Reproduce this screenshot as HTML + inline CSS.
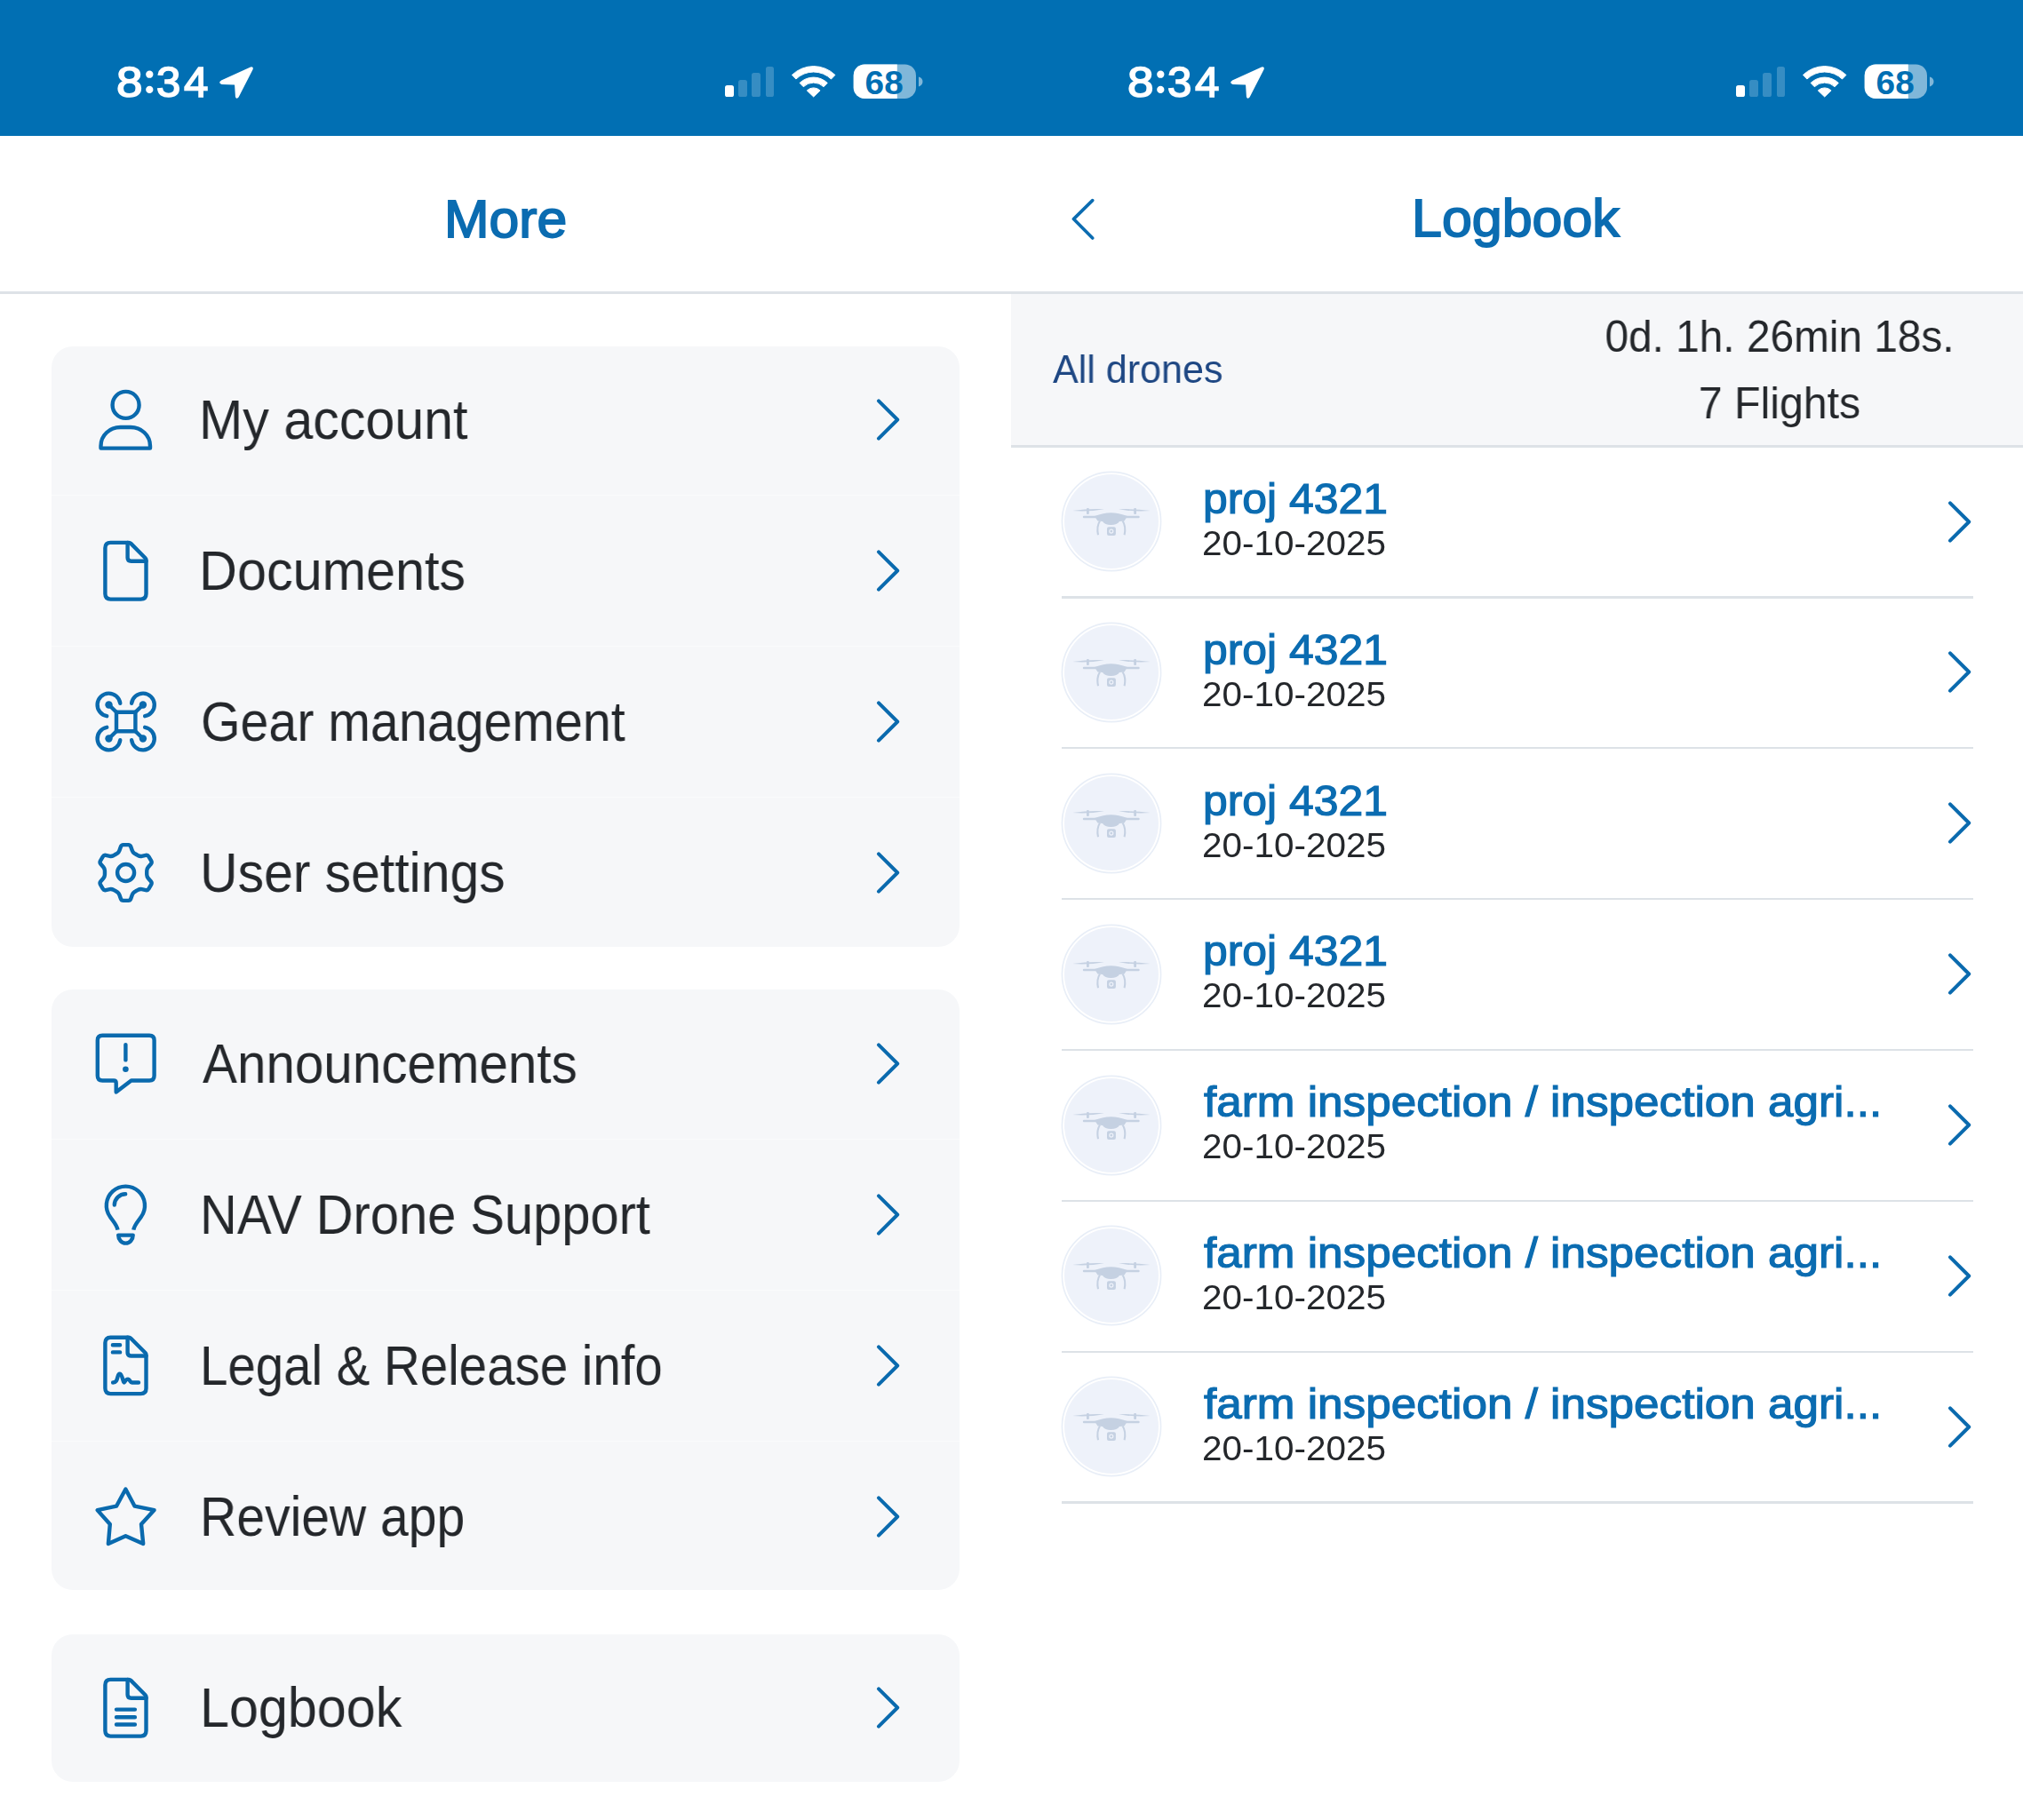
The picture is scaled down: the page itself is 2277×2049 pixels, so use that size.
<!DOCTYPE html>
<html><head><meta charset="utf-8"><style>
html,body{margin:0;padding:0;}
body{width:2277px;height:2049px;position:relative;overflow:hidden;background:#ffffff;font-family:"Liberation Sans",sans-serif;}
.t{position:absolute;white-space:nowrap;will-change:transform;}
</style></head><body>
<div style="position:absolute;left:0px;top:0px;width:2277px;height:153px;background:#016fb3;border-radius:0px;"></div>
<div class="t" style="left:131.00px;top:68.11px;font-size:48.30px;line-height:48.30px;color:#fff;font-weight:400;-webkit-text-stroke:1.6px #fff;transform:scaleX(1.1);transform-origin:left;">8</div>
<div class="t" style="left:176.00px;top:68.11px;font-size:48.30px;line-height:48.30px;color:#fff;font-weight:400;-webkit-text-stroke:1.6px #fff;letter-spacing:3.5px;transform:scaleX(1.02);transform-origin:left;">34</div>
<svg style="position:absolute;left:160px;top:76px;" width="18" height="36" viewBox="0 0 18 36"><circle cx="8.3" cy="7.7" r="4.15" fill="#fff"/><circle cx="8.3" cy="24.9" r="4.15" fill="#fff"/></svg>
<svg style="position:absolute;left:240px;top:70px;" width="50" height="46" viewBox="0 0 50 46"><path d="M42.5 6.8 L9.5 21.8 Q7.5 23 9.5 23.6 L24 24.2 Q25.3 24.3 25.4 25.6 L26.2 38.6 Q26.6 40 27.4 38.8 L43.4 7.7 Q44 6.2 42.5 6.8 Z" fill="#fff" stroke="#fff" stroke-width="2.6" stroke-linejoin="round"/></svg>
<div style="position:absolute;left:816px;top:96px;width:9.9px;height:13.099999999999994px;background:rgba(255,255,255,1);border-radius:2.6px;"></div>
<div style="position:absolute;left:831.3px;top:89.7px;width:9.3px;height:19.39999999999999px;background:rgba(255,255,255,0.21);border-radius:2.6px;"></div>
<div style="position:absolute;left:846.3px;top:82px;width:9.3px;height:27.099999999999994px;background:rgba(255,255,255,0.21);border-radius:2.6px;"></div>
<div style="position:absolute;left:861.8px;top:74.6px;width:9.3px;height:34.5px;background:rgba(255,255,255,0.21);border-radius:2.6px;"></div>
<svg style="position:absolute;left:888px;top:70px;" width="56" height="44" viewBox="0 0 56 44"><g fill="#fff" stroke="#fff" stroke-width="1" stroke-linejoin="round"><path d="M3.46 14.40 A34.9 34.9 0 0 1 51.94 14.40 L47.50 19.00 A28.5 28.5 0 0 0 7.90 19.00 Z"/><path d="M12.14 23.39 A22.4 22.4 0 0 1 43.26 23.39 L39.09 27.70 A16.4 16.4 0 0 0 16.31 27.70 Z"/><path d="M27.7 39.0 L20.30 31.90 A10.6 10.6 0 0 1 35.10 31.90 Z"/></g></svg>
<svg style="position:absolute;left:958px;top:70px;" width="84" height="44" viewBox="0 0 84 44"><defs><clipPath id="bc0"><rect x="2.7" y="2.4" width="70.3" height="38.6" rx="12.5"/></clipPath></defs><rect x="2.7" y="2.4" width="70.3" height="38.6" rx="12.5" fill="rgba(255,255,255,0.5)"/><rect x="0" y="0" width="51.8" height="44" fill="#fff" clip-path="url(#bc0)"/><path d="M76 16.6 Q80.5 18 80.5 22 Q80.5 26 76 27.4 Z" fill="rgba(255,255,255,0.5)"/><text x="37.2" y="35.6" text-anchor="middle" font-family="Liberation Sans" font-weight="700" font-size="37.3" fill="#016fb3" transform="translate(37.8 0) scale(1.04 1) translate(-37.8 0)">68</text></svg>
<div class="t" style="left:1269.00px;top:68.11px;font-size:48.30px;line-height:48.30px;color:#fff;font-weight:400;-webkit-text-stroke:1.6px #fff;transform:scaleX(1.1);transform-origin:left;">8</div>
<div class="t" style="left:1314.00px;top:68.11px;font-size:48.30px;line-height:48.30px;color:#fff;font-weight:400;-webkit-text-stroke:1.6px #fff;letter-spacing:3.5px;transform:scaleX(1.02);transform-origin:left;">34</div>
<svg style="position:absolute;left:1298px;top:76px;" width="18" height="36" viewBox="0 0 18 36"><circle cx="8.3" cy="7.7" r="4.15" fill="#fff"/><circle cx="8.3" cy="24.9" r="4.15" fill="#fff"/></svg>
<svg style="position:absolute;left:1378px;top:70px;" width="50" height="46" viewBox="0 0 50 46"><path d="M42.5 6.8 L9.5 21.8 Q7.5 23 9.5 23.6 L24 24.2 Q25.3 24.3 25.4 25.6 L26.2 38.6 Q26.6 40 27.4 38.8 L43.4 7.7 Q44 6.2 42.5 6.8 Z" fill="#fff" stroke="#fff" stroke-width="2.6" stroke-linejoin="round"/></svg>
<div style="position:absolute;left:1954px;top:96px;width:9.9px;height:13.099999999999994px;background:rgba(255,255,255,1);border-radius:2.6px;"></div>
<div style="position:absolute;left:1969.3px;top:89.7px;width:9.3px;height:19.39999999999999px;background:rgba(255,255,255,0.21);border-radius:2.6px;"></div>
<div style="position:absolute;left:1984.3px;top:82px;width:9.3px;height:27.099999999999994px;background:rgba(255,255,255,0.21);border-radius:2.6px;"></div>
<div style="position:absolute;left:1999.8px;top:74.6px;width:9.3px;height:34.5px;background:rgba(255,255,255,0.21);border-radius:2.6px;"></div>
<svg style="position:absolute;left:2026px;top:70px;" width="56" height="44" viewBox="0 0 56 44"><g fill="#fff" stroke="#fff" stroke-width="1" stroke-linejoin="round"><path d="M3.46 14.40 A34.9 34.9 0 0 1 51.94 14.40 L47.50 19.00 A28.5 28.5 0 0 0 7.90 19.00 Z"/><path d="M12.14 23.39 A22.4 22.4 0 0 1 43.26 23.39 L39.09 27.70 A16.4 16.4 0 0 0 16.31 27.70 Z"/><path d="M27.7 39.0 L20.30 31.90 A10.6 10.6 0 0 1 35.10 31.90 Z"/></g></svg>
<svg style="position:absolute;left:2096px;top:70px;" width="84" height="44" viewBox="0 0 84 44"><defs><clipPath id="bc1138"><rect x="2.7" y="2.4" width="70.3" height="38.6" rx="12.5"/></clipPath></defs><rect x="2.7" y="2.4" width="70.3" height="38.6" rx="12.5" fill="rgba(255,255,255,0.5)"/><rect x="0" y="0" width="51.8" height="44" fill="#fff" clip-path="url(#bc1138)"/><path d="M76 16.6 Q80.5 18 80.5 22 Q80.5 26 76 27.4 Z" fill="rgba(255,255,255,0.5)"/><text x="37.2" y="35.6" text-anchor="middle" font-family="Liberation Sans" font-weight="700" font-size="37.3" fill="#016fb3" transform="translate(37.8 0) scale(1.04 1) translate(-37.8 0)">68</text></svg>
<div style="position:absolute;left:0px;top:153px;width:2277px;height:175px;background:#ffffff;border-radius:0px;"></div>
<div style="position:absolute;left:0px;top:328px;width:2277px;height:3px;background:#dde2e7;border-radius:0px;"></div>
<div class="t" style="left:499.50px;top:217.55px;font-size:58.30px;line-height:58.30px;color:#0b6cb1;font-weight:400;-webkit-text-stroke:1.8px #0b6cb1;transform:scaleX(1.04);transform-origin:left;">More</div>
<div class="t" style="left:1589.00px;top:217.05px;font-size:58.30px;line-height:58.30px;color:#0b6cb1;font-weight:400;-webkit-text-stroke:1.8px #0b6cb1;transform:scaleX(1.045);transform-origin:left;">Logbook</div>
<svg style="position:absolute;left:1200px;top:215px;" width="40" height="62" viewBox="0 0 40 62"><path d="M29.7 10.6 L8.4 31.6 L29.7 53" fill="none" stroke="#0b6cb1" stroke-width="3.6" stroke-linecap="round" stroke-linejoin="round"/></svg>
<div style="position:absolute;left:58px;top:389.8px;width:1022px;height:675.9px;background:#f6f7f9;border-radius:24px;"></div>
<div style="position:absolute;left:58px;top:1113.9px;width:1022px;height:675.9px;background:#f6f7f9;border-radius:24px;"></div>
<div style="position:absolute;left:58px;top:1839.6px;width:1022px;height:166.3px;background:#f6f7f9;border-radius:24px;"></div>
<div style="position:absolute;left:58px;top:557px;width:1022px;height:1px;background:rgba(255,255,255,0.45);border-radius:0px;"></div>
<div style="position:absolute;left:58px;top:727px;width:1022px;height:1px;background:rgba(255,255,255,0.45);border-radius:0px;"></div>
<div style="position:absolute;left:58px;top:897px;width:1022px;height:1px;background:rgba(255,255,255,0.45);border-radius:0px;"></div>
<div style="position:absolute;left:58px;top:1282px;width:1022px;height:1px;background:rgba(255,255,255,0.45);border-radius:0px;"></div>
<div style="position:absolute;left:58px;top:1452px;width:1022px;height:1px;background:rgba(255,255,255,0.45);border-radius:0px;"></div>
<div style="position:absolute;left:58px;top:1622px;width:1022px;height:1px;background:rgba(255,255,255,0.45);border-radius:0px;"></div>
<div class="t" style="left:224.10px;top:441.24px;font-size:62.50px;line-height:62.50px;color:#24272b;font-weight:400;transform:scaleX(0.9463);transform-origin:left;">My account</div>
<svg style="position:absolute;left:95px;top:420px;" width="100" height="100" viewBox="0 0 100 100"><circle cx="46.6" cy="35.9" r="15" fill="none" stroke="#0a6aae" stroke-width="4.4" stroke-linecap="round" stroke-linejoin="round"/><path d="M18.5 84.6 L18.5 82 C18.5 70 28.5 61 40.5 61 L52 61 C64 61 74 70 74 82 L74 84.6 Z" fill="none" stroke="#0a6aae" stroke-width="4.4" stroke-linecap="round" stroke-linejoin="round"/></svg>
<svg style="position:absolute;left:986px;top:449.15px;" width="30" height="48" viewBox="0 0 30 48"><path d="M3 2.3 L24.2 23.5 L3 44.7" fill="none" stroke="#0a6aae" stroke-width="4" stroke-linecap="round" stroke-linejoin="round"/></svg>
<div class="t" style="left:224.10px;top:611.29px;font-size:62.50px;line-height:62.50px;color:#24272b;font-weight:400;transform:scaleX(0.9495);transform-origin:left;">Documents</div>
<svg style="position:absolute;left:95px;top:590px;" width="100" height="100" viewBox="0 0 100 100"><path d="M29.4 20.9 L50 20.9 Q51.3 20.9 52.3 21.9 L68.5 38.2 Q69.5 39.2 69.5 40.6 L69.5 78.6 Q69.5 84.6 63.5 84.6 L29.4 84.6 Q23.4 84.6 23.4 78.6 L23.4 26.9 Q23.4 20.9 29.4 20.9 Z" fill="none" stroke="#0a6aae" stroke-width="4.4" stroke-linecap="round" stroke-linejoin="round"/><path d="M48.6 20.9 L48.6 37.8 Q48.6 41.8 52.6 41.8 L69.5 41.8" fill="none" stroke="#0a6aae" stroke-width="4.4" stroke-linecap="round" stroke-linejoin="round"/></svg>
<svg style="position:absolute;left:986px;top:619.2px;" width="30" height="48" viewBox="0 0 30 48"><path d="M3 2.3 L24.2 23.5 L3 44.7" fill="none" stroke="#0a6aae" stroke-width="4" stroke-linecap="round" stroke-linejoin="round"/></svg>
<div class="t" style="left:226.20px;top:781.34px;font-size:62.50px;line-height:62.50px;color:#24272b;font-weight:400;transform:scaleX(0.9166);transform-origin:left;">Gear management</div>
<svg style="position:absolute;left:95px;top:760px;" width="100" height="100" viewBox="0 0 100 100"><rect x="36" y="41.8" width="21.4" height="21.4" fill="none" stroke="#0a6aae" stroke-width="4.4" stroke-linecap="round" stroke-linejoin="round" stroke-linejoin="miter"/><path d="M36 41.8 L27.5 33.5" fill="none" stroke="#0a6aae" stroke-width="4.4" stroke-linecap="round" stroke-linejoin="round"/><circle cx="27.5" cy="33.5" r="4.2" fill="#0a6aae"/><path d="M40.27 31.70 A12.9 12.9 0 1 0 25.26 46.20" fill="none" stroke="#0a6aae" stroke-width="4.4" stroke-linecap="round" stroke-linejoin="round"/><path d="M57.4 41.8 L65.9 33.5" fill="none" stroke="#0a6aae" stroke-width="4.4" stroke-linecap="round" stroke-linejoin="round"/><circle cx="65.9" cy="33.5" r="4.2" fill="#0a6aae"/><path d="M68.14 46.20 A12.9 12.9 0 1 0 53.13 31.70" fill="none" stroke="#0a6aae" stroke-width="4.4" stroke-linecap="round" stroke-linejoin="round"/><path d="M36 63.2 L27.5 71.5" fill="none" stroke="#0a6aae" stroke-width="4.4" stroke-linecap="round" stroke-linejoin="round"/><circle cx="27.5" cy="71.5" r="4.2" fill="#0a6aae"/><path d="M25.26 58.80 A12.9 12.9 0 1 0 40.27 73.30" fill="none" stroke="#0a6aae" stroke-width="4.4" stroke-linecap="round" stroke-linejoin="round"/><path d="M57.4 63.2 L65.9 71.5" fill="none" stroke="#0a6aae" stroke-width="4.4" stroke-linecap="round" stroke-linejoin="round"/><circle cx="65.9" cy="71.5" r="4.2" fill="#0a6aae"/><path d="M53.13 73.30 A12.9 12.9 0 1 0 68.14 58.80" fill="none" stroke="#0a6aae" stroke-width="4.4" stroke-linecap="round" stroke-linejoin="round"/></svg>
<svg style="position:absolute;left:986px;top:789.25px;" width="30" height="48" viewBox="0 0 30 48"><path d="M3 2.3 L24.2 23.5 L3 44.7" fill="none" stroke="#0a6aae" stroke-width="4" stroke-linecap="round" stroke-linejoin="round"/></svg>
<div class="t" style="left:225.00px;top:951.39px;font-size:62.50px;line-height:62.50px;color:#24272b;font-weight:400;transform:scaleX(0.9422);transform-origin:left;">User settings</div>
<svg style="position:absolute;left:95px;top:930px;" width="100" height="100" viewBox="0 0 100 100"><path d="M36.85 30.78 Q38.72 29.62 39.43 27.54 L40.92 23.17 Q41.63 21.09 43.83 21.09 L49.37 21.09 Q51.57 21.09 52.28 23.17 L53.77 27.54 Q54.48 29.62 56.35 30.78 L56.53 30.90 Q58.40 32.06 60.34 33.10 L60.54 33.20 Q62.48 34.24 64.63 33.81 L69.16 32.91 Q71.31 32.49 72.41 34.39 L75.19 39.20 Q76.29 41.10 74.84 42.76 L71.80 46.23 Q70.36 47.88 70.28 50.08 L70.27 50.30 Q70.20 52.50 70.27 54.70 L70.28 54.92 Q70.36 57.12 71.80 58.77 L74.84 62.24 Q76.29 63.90 75.19 65.80 L72.41 70.61 Q71.31 72.51 69.16 72.09 L64.63 71.19 Q62.48 70.76 60.54 71.80 L60.34 71.90 Q58.40 72.94 56.53 74.10 L56.35 74.22 Q54.48 75.38 53.77 77.46 L52.28 81.83 Q51.57 83.91 49.37 83.91 L43.83 83.91 Q41.63 83.91 40.92 81.83 L39.43 77.46 Q38.72 75.38 36.85 74.22 L36.67 74.10 Q34.80 72.94 32.86 71.90 L32.66 71.80 Q30.72 70.76 28.57 71.19 L24.04 72.09 Q21.89 72.51 20.79 70.61 L18.01 65.80 Q16.91 63.90 18.36 62.24 L21.40 58.77 Q22.84 57.12 22.92 54.92 L22.93 54.70 Q23.00 52.50 22.93 50.30 L22.92 50.08 Q22.84 47.88 21.40 46.23 L18.36 42.76 Q16.91 41.10 18.01 39.20 L20.79 34.39 Q21.89 32.49 24.04 32.91 L28.57 33.81 Q30.72 34.24 32.66 33.20 L32.86 33.10 Q34.80 32.06 36.67 30.90 Z" fill="none" stroke="#0a6aae" stroke-width="4.4" stroke-linecap="round" stroke-linejoin="round"/><circle cx="46.6" cy="52.5" r="9.5" fill="none" stroke="#0a6aae" stroke-width="4.4" stroke-linecap="round" stroke-linejoin="round"/></svg>
<svg style="position:absolute;left:986px;top:959.3px;" width="30" height="48" viewBox="0 0 30 48"><path d="M3 2.3 L24.2 23.5 L3 44.7" fill="none" stroke="#0a6aae" stroke-width="4" stroke-linecap="round" stroke-linejoin="round"/></svg>
<div class="t" style="left:227.70px;top:1165.84px;font-size:62.50px;line-height:62.50px;color:#24272b;font-weight:400;transform:scaleX(0.9337);transform-origin:left;">Announcements</div>
<svg style="position:absolute;left:95px;top:1150px;" width="100" height="100" viewBox="0 0 100 100"><path d="M52.7 66.5 L73.1 66.5 Q78.6 66.5 78.6 61 L78.6 21.2 Q78.6 15.7 73.1 15.7 L20.3 15.7 Q14.8 15.7 14.8 21.2 L14.8 61 Q14.8 66.5 20.3 66.5 L33 66.5 Q35.7 66.5 35.7 69.2 L35.7 79.5 Z" fill="none" stroke="#0a6aae" stroke-width="4.4" stroke-linecap="round" stroke-linejoin="round"/><path d="M46.4 26.1 L46.4 43.4" fill="none" stroke="#0a6aae" stroke-width="4.4" stroke-linecap="round" stroke-linejoin="round"/><circle cx="46.4" cy="53.8" r="3.3" fill="#0a6aae"/></svg>
<svg style="position:absolute;left:986px;top:1173.75px;" width="30" height="48" viewBox="0 0 30 48"><path d="M3 2.3 L24.2 23.5 L3 44.7" fill="none" stroke="#0a6aae" stroke-width="4" stroke-linecap="round" stroke-linejoin="round"/></svg>
<div class="t" style="left:225.00px;top:1335.89px;font-size:62.50px;line-height:62.50px;color:#24272b;font-weight:400;transform:scaleX(0.9256);transform-origin:left;">NAV Drone Support</div>
<svg style="position:absolute;left:95px;top:1320px;" width="100" height="100" viewBox="0 0 100 100"><path d="M37.5 64.6 C36.5 59 32 54.5 29 50 A21.6 21.6 0 1 1 63.8 50 C60.8 54.5 56.3 59 55.3 64.6" fill="none" stroke="#0a6aae" stroke-width="4.4" stroke-linecap="butt" stroke-linejoin="round"/><path d="M33.8 36.5 A12.5 12.5 0 0 1 46.2 24.2" fill="none" stroke="#0a6aae" stroke-width="4.4" stroke-linecap="round" stroke-linejoin="round"/><path d="M38.2 70.6 L54.7 70.6 A8.25 9 0 0 1 38.2 70.6 Z" fill="none" stroke="#0a6aae" stroke-width="4.4" stroke-linecap="round" stroke-linejoin="round"/></svg>
<svg style="position:absolute;left:986px;top:1343.8px;" width="30" height="48" viewBox="0 0 30 48"><path d="M3 2.3 L24.2 23.5 L3 44.7" fill="none" stroke="#0a6aae" stroke-width="4" stroke-linecap="round" stroke-linejoin="round"/></svg>
<div class="t" style="left:225.00px;top:1505.94px;font-size:62.50px;line-height:62.50px;color:#24272b;font-weight:400;transform:scaleX(0.9028);transform-origin:left;">Legal &amp; Release info</div>
<svg style="position:absolute;left:95px;top:1490px;" width="100" height="100" viewBox="0 0 100 100"><path d="M29.4 15.7 L50 15.7 Q51.3 15.7 52.3 16.7 L68.5 33 Q69.5 34 69.5 35.4 L69.5 73.1 Q69.5 79.1 63.5 79.1 L29.4 79.1 Q23.4 79.1 23.4 73.1 L23.4 21.7 Q23.4 15.7 29.4 15.7 Z" fill="none" stroke="#0a6aae" stroke-width="4.4" stroke-linecap="round" stroke-linejoin="round"/><path d="M48.6 15.7 L48.6 32.5 Q48.6 36.5 52.6 36.5 L69.5 36.5" fill="none" stroke="#0a6aae" stroke-width="4.4" stroke-linecap="round" stroke-linejoin="round"/><path d="M31.9 24.2 L40.1 24.2 M31.9 32.4 L40.1 32.4" fill="none" stroke="#0a6aae" stroke-width="4.4" stroke-linecap="round" stroke-linejoin="round"/><path d="M32.1 66.5 C36 66.5 36.5 64 37.5 60 C38.5 56 39 56.6 40.1 56.6 C41.5 56.6 42.5 60 43.5 64 C44.2 67 44.8 66.8 45.5 65.5 C46.5 63.5 47.5 62.6 49.2 62.6 C51 62.6 51.5 66.5 53.5 66.5 L61 66.5" fill="none" stroke="#0a6aae" stroke-width="4.4" stroke-linecap="round" stroke-linejoin="round"/></svg>
<svg style="position:absolute;left:986px;top:1513.85px;" width="30" height="48" viewBox="0 0 30 48"><path d="M3 2.3 L24.2 23.5 L3 44.7" fill="none" stroke="#0a6aae" stroke-width="4" stroke-linecap="round" stroke-linejoin="round"/></svg>
<div class="t" style="left:225.00px;top:1675.99px;font-size:62.50px;line-height:62.50px;color:#24272b;font-weight:400;transform:scaleX(0.9133);transform-origin:left;">Review app</div>
<svg style="position:absolute;left:95px;top:1660px;" width="100" height="100" viewBox="0 0 100 100"><path d="M46.4 16.5 L56.6 35.7 L78.6 40.1 L64 56 L66.2 78 L46.4 69.2 L26.9 78 L28.8 56 L14.6 40.1 L36 35.7 Z" fill="none" stroke="#0a6aae" stroke-width="4.4" stroke-linecap="round" stroke-linejoin="round"/></svg>
<svg style="position:absolute;left:986px;top:1683.9px;" width="30" height="48" viewBox="0 0 30 48"><path d="M3 2.3 L24.2 23.5 L3 44.7" fill="none" stroke="#0a6aae" stroke-width="4" stroke-linecap="round" stroke-linejoin="round"/></svg>
<div class="t" style="left:225.20px;top:1890.79px;font-size:62.50px;line-height:62.50px;color:#24272b;font-weight:400;transform:scaleX(0.948);transform-origin:left;">Logbook</div>
<svg style="position:absolute;left:95px;top:1870px;" width="100" height="100" viewBox="0 0 100 100"><path d="M29.4 20.9 L50 20.9 Q51.3 20.9 52.3 21.9 L68.5 38.2 Q69.5 39.2 69.5 40.6 L69.5 78.6 Q69.5 84.6 63.5 84.6 L29.4 84.6 Q23.4 84.6 23.4 78.6 L23.4 26.9 Q23.4 20.9 29.4 20.9 Z" fill="none" stroke="#0a6aae" stroke-width="4.4" stroke-linecap="round" stroke-linejoin="round"/><path d="M48.6 20.9 L48.6 37.8 Q48.6 41.8 52.6 41.8 L69.5 41.8" fill="none" stroke="#0a6aae" stroke-width="4.4" stroke-linecap="round" stroke-linejoin="round"/><path d="M36 54.6 L56.9 54.6 M36 63.2 L56.9 63.2 M36 71.5 L56.9 71.5" fill="none" stroke="#0a6aae" stroke-width="4.4" stroke-linecap="round" stroke-linejoin="round"/></svg>
<svg style="position:absolute;left:986px;top:1898.7px;" width="30" height="48" viewBox="0 0 30 48"><path d="M3 2.3 L24.2 23.5 L3 44.7" fill="none" stroke="#0a6aae" stroke-width="4" stroke-linecap="round" stroke-linejoin="round"/></svg>
<div style="position:absolute;left:1138px;top:331px;width:1139px;height:170px;background:#f6f7f9;border-radius:0px;"></div>
<div style="position:absolute;left:1138px;top:501px;width:1139px;height:3px;background:#dde2e7;border-radius:0px;"></div>
<div class="t" style="left:1184.50px;top:394.69px;font-size:43.60px;line-height:43.60px;color:#1e4783;font-weight:400;transform:scaleX(0.988);transform-origin:left;">All drones</div>
<div class="t" style="left:2003.00px;top:354.40px;font-size:49.50px;line-height:49.50px;color:#24272b;font-weight:400;transform:translateX(-50%) scaleX(0.965);transform-origin:center;">0d. 1h. 26min 18s.</div>
<div class="t" style="left:2003.00px;top:428.90px;font-size:49.50px;line-height:49.50px;color:#24272b;font-weight:400;transform:translateX(-50%) scaleX(0.975);transform-origin:center;">7 Flights</div>
<svg style="position:absolute;left:1193px;top:529px;" width="116" height="116" viewBox="0 0 116 116"><circle cx="58" cy="58" r="55.6" fill="#fff" stroke="#e8eef7" stroke-width="1.6"/><circle cx="58" cy="58" r="53" fill="#eef2fa"/><g fill="#c5d1e2" transform="translate(-3,-4)"><path d="M17.2 50.1 Q35 47.5 52.9 48.3 Q35 51.5 17.2 50.1 Z"/><path d="M69 48.3 Q87 47.5 104.7 50.1 Q87 51.5 69 48.3 Z"/><rect x="33" y="47" width="2.8" height="7" rx="1"/><rect x="86.2" y="47" width="2.8" height="7" rx="1"/><rect x="28.8" y="55.8" width="63.9" height="2.4" rx="1.2"/><path d="M42 56 Q52 52.2 60.4 52.2 Q69 52.2 79 56 L75.5 61.5 L70 62 Q67.5 66 60.4 66 Q53.5 66 51 62 L45.5 61.5 Z"/><path d="M48 61.5 Q44 67.5 46 77.3" fill="none" stroke="#c5d1e2" stroke-width="2.1"/><path d="M73.6 61.5 Q77.6 67.5 75.6 77.3" fill="none" stroke="#c5d1e2" stroke-width="2.1"/><rect x="56" y="68.3" width="9.9" height="9.7" rx="2"/><circle cx="60.8" cy="73.1" r="2.6" fill="#eef2fa"/><circle cx="60.8" cy="73.1" r="1.4"/></g></svg>
<div class="t" style="left:1354.00px;top:537.71px;font-size:47.60px;line-height:47.60px;color:#0b6cb1;font-weight:400;-webkit-text-stroke:1.2px #0b6cb1;transform:scaleX(1.048);transform-origin:left;">proj 4321</div>
<div class="t" style="left:1353.10px;top:592.79px;font-size:38.40px;line-height:38.40px;color:#24272b;font-weight:400;transform:scaleX(1.054);transform-origin:left;">20-10-2025</div>
<svg style="position:absolute;left:2192.3px;top:563.5px;" width="30" height="48" viewBox="0 0 30 48"><path d="M3 2.3 L24.2 23.5 L3 44.7" fill="none" stroke="#0a6aae" stroke-width="4" stroke-linecap="round" stroke-linejoin="round"/></svg>
<div style="position:absolute;left:1195px;top:671.0px;width:1025.5px;height:2.6px;background:#dde2e7;border-radius:0px;"></div>
<svg style="position:absolute;left:1193px;top:699px;" width="116" height="116" viewBox="0 0 116 116"><circle cx="58" cy="58" r="55.6" fill="#fff" stroke="#e8eef7" stroke-width="1.6"/><circle cx="58" cy="58" r="53" fill="#eef2fa"/><g fill="#c5d1e2" transform="translate(-3,-4)"><path d="M17.2 50.1 Q35 47.5 52.9 48.3 Q35 51.5 17.2 50.1 Z"/><path d="M69 48.3 Q87 47.5 104.7 50.1 Q87 51.5 69 48.3 Z"/><rect x="33" y="47" width="2.8" height="7" rx="1"/><rect x="86.2" y="47" width="2.8" height="7" rx="1"/><rect x="28.8" y="55.8" width="63.9" height="2.4" rx="1.2"/><path d="M42 56 Q52 52.2 60.4 52.2 Q69 52.2 79 56 L75.5 61.5 L70 62 Q67.5 66 60.4 66 Q53.5 66 51 62 L45.5 61.5 Z"/><path d="M48 61.5 Q44 67.5 46 77.3" fill="none" stroke="#c5d1e2" stroke-width="2.1"/><path d="M73.6 61.5 Q77.6 67.5 75.6 77.3" fill="none" stroke="#c5d1e2" stroke-width="2.1"/><rect x="56" y="68.3" width="9.9" height="9.7" rx="2"/><circle cx="60.8" cy="73.1" r="2.6" fill="#eef2fa"/><circle cx="60.8" cy="73.1" r="1.4"/></g></svg>
<div class="t" style="left:1354.00px;top:707.61px;font-size:47.60px;line-height:47.60px;color:#0b6cb1;font-weight:400;-webkit-text-stroke:1.2px #0b6cb1;transform:scaleX(1.048);transform-origin:left;">proj 4321</div>
<div class="t" style="left:1353.10px;top:762.69px;font-size:38.40px;line-height:38.40px;color:#24272b;font-weight:400;transform:scaleX(1.054);transform-origin:left;">20-10-2025</div>
<svg style="position:absolute;left:2192.3px;top:733.4px;" width="30" height="48" viewBox="0 0 30 48"><path d="M3 2.3 L24.2 23.5 L3 44.7" fill="none" stroke="#0a6aae" stroke-width="4" stroke-linecap="round" stroke-linejoin="round"/></svg>
<div style="position:absolute;left:1195px;top:840.9px;width:1025.5px;height:2.6px;background:#dde2e7;border-radius:0px;"></div>
<svg style="position:absolute;left:1193px;top:869px;" width="116" height="116" viewBox="0 0 116 116"><circle cx="58" cy="58" r="55.6" fill="#fff" stroke="#e8eef7" stroke-width="1.6"/><circle cx="58" cy="58" r="53" fill="#eef2fa"/><g fill="#c5d1e2" transform="translate(-3,-4)"><path d="M17.2 50.1 Q35 47.5 52.9 48.3 Q35 51.5 17.2 50.1 Z"/><path d="M69 48.3 Q87 47.5 104.7 50.1 Q87 51.5 69 48.3 Z"/><rect x="33" y="47" width="2.8" height="7" rx="1"/><rect x="86.2" y="47" width="2.8" height="7" rx="1"/><rect x="28.8" y="55.8" width="63.9" height="2.4" rx="1.2"/><path d="M42 56 Q52 52.2 60.4 52.2 Q69 52.2 79 56 L75.5 61.5 L70 62 Q67.5 66 60.4 66 Q53.5 66 51 62 L45.5 61.5 Z"/><path d="M48 61.5 Q44 67.5 46 77.3" fill="none" stroke="#c5d1e2" stroke-width="2.1"/><path d="M73.6 61.5 Q77.6 67.5 75.6 77.3" fill="none" stroke="#c5d1e2" stroke-width="2.1"/><rect x="56" y="68.3" width="9.9" height="9.7" rx="2"/><circle cx="60.8" cy="73.1" r="2.6" fill="#eef2fa"/><circle cx="60.8" cy="73.1" r="1.4"/></g></svg>
<div class="t" style="left:1354.00px;top:877.51px;font-size:47.60px;line-height:47.60px;color:#0b6cb1;font-weight:400;-webkit-text-stroke:1.2px #0b6cb1;transform:scaleX(1.048);transform-origin:left;">proj 4321</div>
<div class="t" style="left:1353.10px;top:932.59px;font-size:38.40px;line-height:38.40px;color:#24272b;font-weight:400;transform:scaleX(1.054);transform-origin:left;">20-10-2025</div>
<svg style="position:absolute;left:2192.3px;top:903.3px;" width="30" height="48" viewBox="0 0 30 48"><path d="M3 2.3 L24.2 23.5 L3 44.7" fill="none" stroke="#0a6aae" stroke-width="4" stroke-linecap="round" stroke-linejoin="round"/></svg>
<div style="position:absolute;left:1195px;top:1010.8px;width:1025.5px;height:2.6px;background:#dde2e7;border-radius:0px;"></div>
<svg style="position:absolute;left:1193px;top:1039px;" width="116" height="116" viewBox="0 0 116 116"><circle cx="58" cy="58" r="55.6" fill="#fff" stroke="#e8eef7" stroke-width="1.6"/><circle cx="58" cy="58" r="53" fill="#eef2fa"/><g fill="#c5d1e2" transform="translate(-3,-4)"><path d="M17.2 50.1 Q35 47.5 52.9 48.3 Q35 51.5 17.2 50.1 Z"/><path d="M69 48.3 Q87 47.5 104.7 50.1 Q87 51.5 69 48.3 Z"/><rect x="33" y="47" width="2.8" height="7" rx="1"/><rect x="86.2" y="47" width="2.8" height="7" rx="1"/><rect x="28.8" y="55.8" width="63.9" height="2.4" rx="1.2"/><path d="M42 56 Q52 52.2 60.4 52.2 Q69 52.2 79 56 L75.5 61.5 L70 62 Q67.5 66 60.4 66 Q53.5 66 51 62 L45.5 61.5 Z"/><path d="M48 61.5 Q44 67.5 46 77.3" fill="none" stroke="#c5d1e2" stroke-width="2.1"/><path d="M73.6 61.5 Q77.6 67.5 75.6 77.3" fill="none" stroke="#c5d1e2" stroke-width="2.1"/><rect x="56" y="68.3" width="9.9" height="9.7" rx="2"/><circle cx="60.8" cy="73.1" r="2.6" fill="#eef2fa"/><circle cx="60.8" cy="73.1" r="1.4"/></g></svg>
<div class="t" style="left:1354.00px;top:1047.41px;font-size:47.60px;line-height:47.60px;color:#0b6cb1;font-weight:400;-webkit-text-stroke:1.2px #0b6cb1;transform:scaleX(1.048);transform-origin:left;">proj 4321</div>
<div class="t" style="left:1353.10px;top:1102.49px;font-size:38.40px;line-height:38.40px;color:#24272b;font-weight:400;transform:scaleX(1.054);transform-origin:left;">20-10-2025</div>
<svg style="position:absolute;left:2192.3px;top:1073.2px;" width="30" height="48" viewBox="0 0 30 48"><path d="M3 2.3 L24.2 23.5 L3 44.7" fill="none" stroke="#0a6aae" stroke-width="4" stroke-linecap="round" stroke-linejoin="round"/></svg>
<div style="position:absolute;left:1195px;top:1180.7px;width:1025.5px;height:2.6px;background:#dde2e7;border-radius:0px;"></div>
<svg style="position:absolute;left:1193px;top:1209px;" width="116" height="116" viewBox="0 0 116 116"><circle cx="58" cy="58" r="55.6" fill="#fff" stroke="#e8eef7" stroke-width="1.6"/><circle cx="58" cy="58" r="53" fill="#eef2fa"/><g fill="#c5d1e2" transform="translate(-3,-4)"><path d="M17.2 50.1 Q35 47.5 52.9 48.3 Q35 51.5 17.2 50.1 Z"/><path d="M69 48.3 Q87 47.5 104.7 50.1 Q87 51.5 69 48.3 Z"/><rect x="33" y="47" width="2.8" height="7" rx="1"/><rect x="86.2" y="47" width="2.8" height="7" rx="1"/><rect x="28.8" y="55.8" width="63.9" height="2.4" rx="1.2"/><path d="M42 56 Q52 52.2 60.4 52.2 Q69 52.2 79 56 L75.5 61.5 L70 62 Q67.5 66 60.4 66 Q53.5 66 51 62 L45.5 61.5 Z"/><path d="M48 61.5 Q44 67.5 46 77.3" fill="none" stroke="#c5d1e2" stroke-width="2.1"/><path d="M73.6 61.5 Q77.6 67.5 75.6 77.3" fill="none" stroke="#c5d1e2" stroke-width="2.1"/><rect x="56" y="68.3" width="9.9" height="9.7" rx="2"/><circle cx="60.8" cy="73.1" r="2.6" fill="#eef2fa"/><circle cx="60.8" cy="73.1" r="1.4"/></g></svg>
<div class="t" style="left:1355.00px;top:1217.31px;font-size:47.60px;line-height:47.60px;color:#0b6cb1;font-weight:400;-webkit-text-stroke:1.2px #0b6cb1;transform:scaleX(1.0765);transform-origin:left;">farm inspection / inspection agri...</div>
<div class="t" style="left:1353.10px;top:1272.39px;font-size:38.40px;line-height:38.40px;color:#24272b;font-weight:400;transform:scaleX(1.054);transform-origin:left;">20-10-2025</div>
<svg style="position:absolute;left:2192.3px;top:1243.1px;" width="30" height="48" viewBox="0 0 30 48"><path d="M3 2.3 L24.2 23.5 L3 44.7" fill="none" stroke="#0a6aae" stroke-width="4" stroke-linecap="round" stroke-linejoin="round"/></svg>
<div style="position:absolute;left:1195px;top:1350.6px;width:1025.5px;height:2.6px;background:#dde2e7;border-radius:0px;"></div>
<svg style="position:absolute;left:1193px;top:1378px;" width="116" height="116" viewBox="0 0 116 116"><circle cx="58" cy="58" r="55.6" fill="#fff" stroke="#e8eef7" stroke-width="1.6"/><circle cx="58" cy="58" r="53" fill="#eef2fa"/><g fill="#c5d1e2" transform="translate(-3,-4)"><path d="M17.2 50.1 Q35 47.5 52.9 48.3 Q35 51.5 17.2 50.1 Z"/><path d="M69 48.3 Q87 47.5 104.7 50.1 Q87 51.5 69 48.3 Z"/><rect x="33" y="47" width="2.8" height="7" rx="1"/><rect x="86.2" y="47" width="2.8" height="7" rx="1"/><rect x="28.8" y="55.8" width="63.9" height="2.4" rx="1.2"/><path d="M42 56 Q52 52.2 60.4 52.2 Q69 52.2 79 56 L75.5 61.5 L70 62 Q67.5 66 60.4 66 Q53.5 66 51 62 L45.5 61.5 Z"/><path d="M48 61.5 Q44 67.5 46 77.3" fill="none" stroke="#c5d1e2" stroke-width="2.1"/><path d="M73.6 61.5 Q77.6 67.5 75.6 77.3" fill="none" stroke="#c5d1e2" stroke-width="2.1"/><rect x="56" y="68.3" width="9.9" height="9.7" rx="2"/><circle cx="60.8" cy="73.1" r="2.6" fill="#eef2fa"/><circle cx="60.8" cy="73.1" r="1.4"/></g></svg>
<div class="t" style="left:1355.00px;top:1387.21px;font-size:47.60px;line-height:47.60px;color:#0b6cb1;font-weight:400;-webkit-text-stroke:1.2px #0b6cb1;transform:scaleX(1.0765);transform-origin:left;">farm inspection / inspection agri...</div>
<div class="t" style="left:1353.10px;top:1442.29px;font-size:38.40px;line-height:38.40px;color:#24272b;font-weight:400;transform:scaleX(1.054);transform-origin:left;">20-10-2025</div>
<svg style="position:absolute;left:2192.3px;top:1413.0px;" width="30" height="48" viewBox="0 0 30 48"><path d="M3 2.3 L24.2 23.5 L3 44.7" fill="none" stroke="#0a6aae" stroke-width="4" stroke-linecap="round" stroke-linejoin="round"/></svg>
<div style="position:absolute;left:1195px;top:1520.5px;width:1025.5px;height:2.6px;background:#dde2e7;border-radius:0px;"></div>
<svg style="position:absolute;left:1193px;top:1548px;" width="116" height="116" viewBox="0 0 116 116"><circle cx="58" cy="58" r="55.6" fill="#fff" stroke="#e8eef7" stroke-width="1.6"/><circle cx="58" cy="58" r="53" fill="#eef2fa"/><g fill="#c5d1e2" transform="translate(-3,-4)"><path d="M17.2 50.1 Q35 47.5 52.9 48.3 Q35 51.5 17.2 50.1 Z"/><path d="M69 48.3 Q87 47.5 104.7 50.1 Q87 51.5 69 48.3 Z"/><rect x="33" y="47" width="2.8" height="7" rx="1"/><rect x="86.2" y="47" width="2.8" height="7" rx="1"/><rect x="28.8" y="55.8" width="63.9" height="2.4" rx="1.2"/><path d="M42 56 Q52 52.2 60.4 52.2 Q69 52.2 79 56 L75.5 61.5 L70 62 Q67.5 66 60.4 66 Q53.5 66 51 62 L45.5 61.5 Z"/><path d="M48 61.5 Q44 67.5 46 77.3" fill="none" stroke="#c5d1e2" stroke-width="2.1"/><path d="M73.6 61.5 Q77.6 67.5 75.6 77.3" fill="none" stroke="#c5d1e2" stroke-width="2.1"/><rect x="56" y="68.3" width="9.9" height="9.7" rx="2"/><circle cx="60.8" cy="73.1" r="2.6" fill="#eef2fa"/><circle cx="60.8" cy="73.1" r="1.4"/></g></svg>
<div class="t" style="left:1355.00px;top:1557.11px;font-size:47.60px;line-height:47.60px;color:#0b6cb1;font-weight:400;-webkit-text-stroke:1.2px #0b6cb1;transform:scaleX(1.0765);transform-origin:left;">farm inspection / inspection agri...</div>
<div class="t" style="left:1353.10px;top:1612.19px;font-size:38.40px;line-height:38.40px;color:#24272b;font-weight:400;transform:scaleX(1.054);transform-origin:left;">20-10-2025</div>
<svg style="position:absolute;left:2192.3px;top:1582.9px;" width="30" height="48" viewBox="0 0 30 48"><path d="M3 2.3 L24.2 23.5 L3 44.7" fill="none" stroke="#0a6aae" stroke-width="4" stroke-linecap="round" stroke-linejoin="round"/></svg>
<div style="position:absolute;left:1195px;top:1690.4px;width:1025.5px;height:2.6px;background:#dde2e7;border-radius:0px;"></div>
</body></html>
